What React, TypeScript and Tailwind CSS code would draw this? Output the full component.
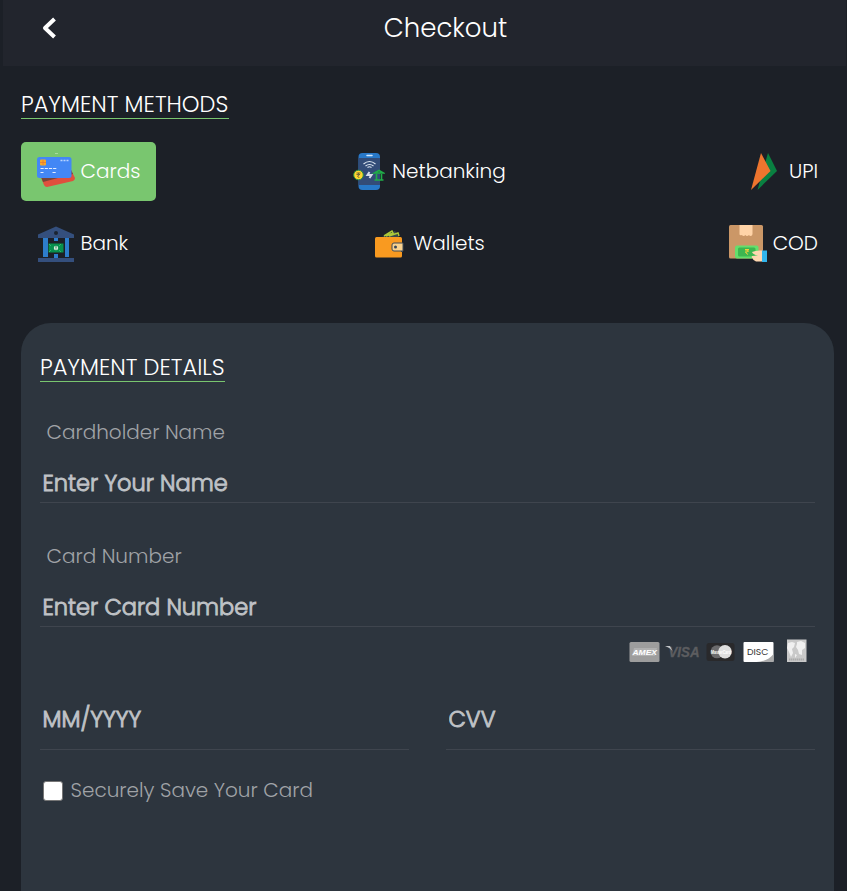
import type { ReactNode } from "react";

function CardsIcon() {
  return (
    <svg className="size-[38px] shrink-0" viewBox="0 0 38 38">
      <path d="M4 24 31 15q2 0 3 2l4 8q0 2-2 3L10 34q-2 0-3-2Z" fill="#e04f3d" />
      <path d="M4 24 34 17l2 4-30 8Z" fill="#7a4338" />
      <rect x="0" y="4" width="34.5" height="21" rx="2.5" fill="#4387f5" />
      <rect x="3" y="6.500" width="6" height="6" rx="1" fill="#f9a825" />
      <path d="M3 9.500h6M6 7v5" stroke="#e77a34" strokeWidth=".8" />
      <path d="M3.500 15.500h16M3.500 19.500h3m9 0h3.500" stroke="#e3edff" strokeWidth="1.200" strokeDasharray="3.200 1" />
      <path d="M23.500 7.500h8" stroke="#b9d4ff" strokeWidth="1.400" strokeDasharray="2 1" />
      <path d="M18 .5h3" stroke="#a9dba0" />
    </svg>
  );
}

function PhoneIcon() {
  return (
    <svg className="h-[37px] w-[32px] shrink-0" viewBox="0.500 0 32 37">
      <rect x="6" width="21.500" height="37" rx="4" fill="#2878c8" />
      <path d="M6 5h21.500v27H6Z" fill="#334c78" />
      <path d="M14.500 2.500h5" stroke="#d5e9ff" strokeWidth="1.500" strokeLinecap="round" />
      <path d="M11 11q6-5 12 0m-10 2q4-3 8 0m-6 1.500q2-1.500 4 0" fill="none" stroke="#dbe4f0" strokeWidth="1.200" />
      <path d="m17 19-2 3h4l-2 3" fill="none" stroke="#d5deea" strokeWidth="2" />
      <circle cx="6" cy="22" r="4.800" fill="#ffd52e" stroke="#239346" strokeWidth="1" />
      <path d="M4 20h4m-4 1.500h3.500M5.500 20q3 2-.5 3l1.800 2" fill="none" stroke="#665d36" strokeWidth=".9" />
      <path d="m22 20 4.500-2.500L31 20ZM24 21v6m5-6v6m-7 0h9" fill="#1d5439" stroke="#20ad49" strokeWidth="1.600" />
    </svg>
  );
}

function UpiIcon() {
  return (
    <svg className="h-[37px] w-[28px] shrink-0" viewBox="0 0 28 37">
      <path d="m18 0 9 18L7.500 37Z" fill="#098041" />
      <path d="M11 0 20.500 18 1 37Z" fill="#ed752e" />
    </svg>
  );
}

function BankIcon() {
  return (
    <svg className="size-[38px] shrink-0" viewBox="0 0 38 38">
      <path d="M6 12h5v20H6Zm11 0h4v4h-4Zm0 17h4v4h-4Zm11-17h4v20h-4Z" fill="#2d7dcc" />
      <path d="M1 9.500 19 1.500l18 8V13H1ZM1 33h36v4H1Z" fill="#344f7d" />
      <circle cx="19" cy="8" r="2" fill="#1b2431" />
      <path d="M11.500 18.500h15v9h-15Z" fill="#07904d" />
      <path d="m12 19 2 2m10-2-2 2m-10 6 2-2m10 2-2-2" stroke="#30b76b" />
      <circle cx="19" cy="23" r="2.200" fill="#d8f0de" />
      <path d="M18 22h2m-1-1v4" stroke="#4b906d" strokeWidth=".7" />
    </svg>
  );
}

function WalletIcon() {
  return (
    <svg className="h-[28px] w-[30px] shrink-0" viewBox="0 0 30 28">
      <path d="m8 7 13-6 4 6Z" fill="#384949" />
      <path d="m10 6 8-5 1 2-7 3m3 0 9-3 1 3" fill="none" stroke="#acc837" strokeWidth="1.500" />
      <rect x="1" y="7" width="27" height="20.500" rx="1.500" fill="#f99a20" />
      <path d="M28 13v9" stroke="#344453" strokeWidth="2" />
      <path d="M20 13h9v8h-9q-2 0-2-2v-4q0-2 2-2Z" fill="#f9d28e" stroke="#3e4b59" strokeWidth="1" />
      <circle cx="21.500" cy="17" r="1.500" fill="#374659" />
    </svg>
  );
}

function CodIcon() {
  return (
    <svg className="size-[38px] shrink-0" viewBox="0 0 38 38">
      <rect y="0" width="34" height="33.500" rx="1.500" fill="#cb9767" />
      <path d="M10.500 0h13v9q0 2-2 2-1 0-1.500-1-1 1-2 1t-1.500-1q-1 1-2 1t-1.500-1q-2.500 1-2.500-1Z" fill="#ffd3a7" />
      <rect x="6" y="20.500" width="23.500" height="13" rx="2" fill="#64df6c" />
      <rect x="9" y="22.500" width="17.500" height="9" rx="1.500" fill="#3db650" />
      <path d="M16 24.500h4m-4 1.500h4m-3-1.500q4 2-.5 3l2.500 2" fill="none" stroke="#efcf3b" strokeWidth="1" />
      <path d="M23 27q3-1.500 8-1.500h2v11h-6q-4-2-3-3-2-1-1-2.500l6-.5q-5-1-6-3.500Z" fill="#ffd7b0" />
      <path d="M33 25.500h5V37h-5Z" fill="#31b5ed" />
    </svg>
  );
}

function CardBrands() {
  return (
    <svg className="mt-[12px] mr-[7px] h-[26px] w-[180px] self-end" viewBox="0 0 180 26" fontFamily="Liberation Sans, sans-serif">
      <rect x="1.500" y="3" width="30" height="20" rx="1.500" fill="#9d9d9d" />
      <path d="M6 9h23l-2 8H4Z" fill="#b0b0b0" />
      <text x="4.500" y="15.800" fontSize="8" fontWeight="700" fontStyle="italic" textLength="24.500" lengthAdjust="spacingAndGlyphs" fill="#fff">AMEX</text>
      <text x="40.500" y="17.800" fontSize="14.500" fontWeight="700" fontStyle="italic" textLength="31" lengthAdjust="spacingAndGlyphs" fill="#5c5d60" stroke="#5c5d60" strokeWidth=".3">VISA</text>
      <path d="M37 7h5l3 6q-2-4-8-6Z" fill="#c3c6c9" />
      <rect x="78.500" y="4" width="28" height="18" rx="2.500" fill="#29292b" />
      <circle cx="89" cy="12.800" r="6.500" fill="#6b6b6d" />
      <circle cx="97" cy="12.800" r="6.800" fill="#dedede" />
      <text x="83" y="14.600" fontSize="4.500" fontWeight="700" textLength="20" lengthAdjust="spacingAndGlyphs" fill="#fff">MasterCard</text>
      <rect x="115.500" y="3" width="30" height="20" rx="1" fill="#fff" />
      <path d="M145.500 15v8h-17q12-1 17-8Z" fill="#aaa" />
      <text x="119" y="15.800" fontSize="9" fontFamily="Poppins, Lato, sans-serif" textLength="21.500" lengthAdjust="spacingAndGlyphs" fill="#333">DISC</text>
      <rect x="159" y="0.500" width="19.500" height="22.500" fill="#c9c9c9" />
      <path d="m160 4 4-1 3 1-1 4-2 2 1 4-2 4-2-5-2-4Zm9-1 4-1 4 2v5l-3 2v5l-3-1-1-4-2-3 1-3Zm-2 12 2 1-2 3Z" fill="#f0f0f0" />
      <path d="M161 20.500h15" stroke="#aaa" strokeWidth="2" strokeDasharray="1.500 .5" />
    </svg>
  );
}

type MethodProps = { icon: ReactNode; label: string; gap: string; active?: boolean };

function Method({ icon, label, gap, active }: MethodProps) {
  return (
    <button className={`flex h-[59px] items-center rounded-[5px] px-4 text-[20px] font-light text-white ${gap} ${active ? "bg-[#79c66f]" : ""}`}>
      {icon}
      <span className="pb-[2px] whitespace-nowrap">{label}</span>
    </button>
  );
}

const placeholder = "block w-full border-b border-[#3f454e] bg-transparent px-[2.500px] font-light text-[22.500px] text-[#bfc2c6] outline-none [-webkit-text-stroke:0.9px_#bfc2c6] placeholder:text-[#bfc2c6]";

export default function App() {
  return (
    <main className="flex h-[891px] w-[847px] flex-col overflow-hidden bg-[#1c2027] font-[Poppins,Inter,sans-serif]">
      <header className="mr-px ml-[3px] grid h-[66px] shrink-0 grid-cols-[1fr_auto_1fr] bg-[#22252d] pt-[9px]">
        <button aria-label="Back" className="mt-[7px] ml-[38px] h-[24px] w-[16px]">
          <svg className="h-[24px] w-[16px]" viewBox="0 0 16 24">
            <path d="M13.500 3 4 12l9.500 9" fill="none" stroke="#fff" strokeWidth="4" strokeLinejoin="round" strokeLinecap="butt" />
          </svg>
        </button>
        <h1 className="ml-[42px] h-[38px] text-[26px] leading-[38px] font-light text-white">Checkout</h1>
      </header>

      <section className="mx-[21px] mr-[13px] pt-[23px]">
        <h2 className="h-[30px] w-[208px] border-b border-[#79c66f] text-[22.500px] leading-[31px] font-light whitespace-nowrap text-white">PAYMENT METHODS</h2>
        <div className="mt-[23px] flex justify-between">
          <div className="flex w-[135px] flex-col gap-[13px]">
            <Method active icon={<CardsIcon />} label="Cards" gap="gap-[5.500px]" />
            <Method icon={<BankIcon />} label="Bank" gap="gap-[5.500px]" />
          </div>
          <div className="flex w-[190px] flex-col items-center gap-[13px] pl-[6px]">
            <Method icon={<PhoneIcon />} label="Netbanking" gap="gap-[7px]" />
            <Method icon={<WalletIcon />} label="Wallets" gap="gap-[9px]" />
          </div>
          <div className="flex w-[137px] flex-col items-end gap-[13px]">
            <Method icon={<UpiIcon />} label="UPI" gap="gap-[11px]" />
            <Method icon={<CodIcon />} label="COD" gap="gap-[6px]" />
          </div>
        </div>
      </section>

      <section className="mt-[50px] mr-[13px] ml-[21px] flex grow flex-col rounded-t-[30px] bg-[#2d353e] px-[19px] pt-[29px]">
        <h2 className="h-[30px] w-[185px] border-b border-[#79c66f] text-[22.500px] leading-[31px] font-light whitespace-nowrap text-white">PAYMENT DETAILS</h2>
        <label htmlFor="holder" className="mt-[35px] ml-[6.500px] h-[30px] text-[20px] leading-[30px] font-light text-[#a0a3a7]">Cardholder Name</label>
        <input id="holder" placeholder="Enter Your Name" className={`mt-[17px] h-[39px] ${placeholder}`} />
        <label htmlFor="number" className="mt-[38px] ml-[6.500px] h-[30px] text-[20px] leading-[30px] font-light text-[#a0a3a7]">Card Number</label>
        <input id="number" placeholder="Enter Card Number" className={`mt-[17px] h-[39px] ${placeholder}`} />
        <CardBrands />
        <div className="mt-[24px] grid grid-cols-2 gap-[37px]">
          <input aria-label="Expiry" placeholder="MM/YYYY" className={`h-[61px] ${placeholder}`} />
          <input aria-label="CVV" placeholder="CVV" className={`h-[61px] ${placeholder}`} />
        </div>
        <label className="mt-[25px] flex h-[30px] items-center text-[20px] font-light text-[#a0a3a7]">
          <input type="checkbox" className="mt-[1px] mr-[8px] ml-[2.500px] size-[20px] appearance-none rounded-[3px] border border-[#767676] bg-white checked:bg-[#79c66f]" />
          Securely Save Your Card
        </label>
      </section>
    </main>
  );
}
